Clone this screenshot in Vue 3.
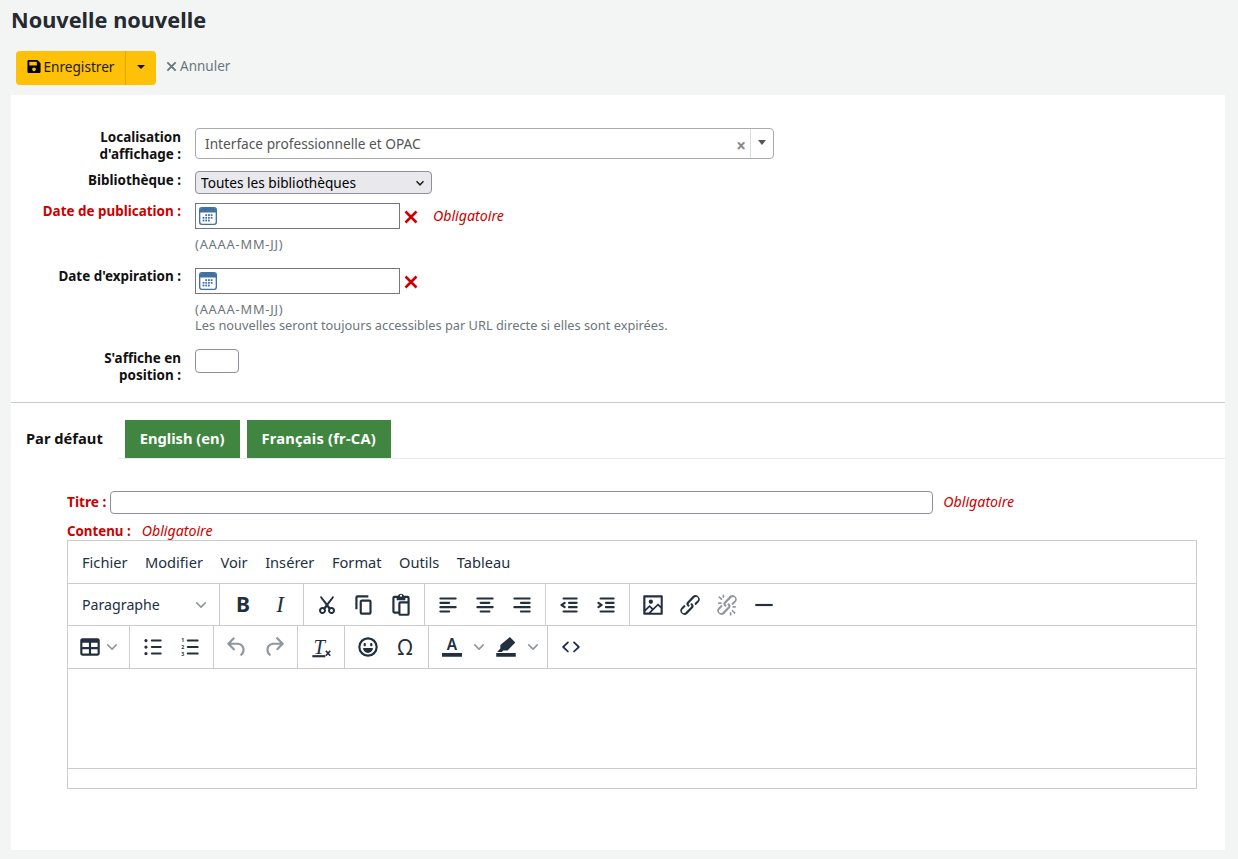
<script setup>
const savePath = 'M433.9 129.9l-83.9-83.9A48 48 0 0 0 316.1 32H48C21.5 32 0 53.5 0 80v352c0 26.5 21.5 48 48 48h352c26.5 0 48-21.5 48-48V163.9a48 48 0 0 0-14.1-33.9zM224 416c-35.3 0-64-28.7-64-64 0-35.3 28.7-64 64-64s64 28.7 64 64c0 35.3-28.7 64-64 64zm96-304.5V212c0 6.6-5.4 12-12 12H76c-6.6 0-12-5.4-12-12V108c0-6.6 5.4-12 12-12h228.5c3.2 0 6.2 1.3 8.5 3.5l3.5 3.5A12 12 0 0 1 320 111.5z'
const chevron = 'M8.7 2.2c.3-.3.8-.3 1 0 .4.4.4.9 0 1.2L5.7 7.8c-.3.3-.9.3-1.2 0L.2 3.4a.8.8 0 010-1.2c.3-.3.8-.3 1.1 0L5 6l3.7-3.8z'
const calDots = [[7,8],[10,8],[13,8],[4,11],[7,11],[10,11],[13,11],[4,14],[7,14],[10,14]]
const icons = {
  cut: 'M7.5 14a3.5 3.5 0 103.1 1.9L12 14l1.4 1.9A3.5 3.5 0 1016.5 14c-.5 0-.9.1-1.3.2L13.3 12l5.4-7.2c.3-.4.2-1-.2-1.3-.4-.3-1-.2-1.3.2L12 10.3 6.8 3.7c-.3-.4-.9-.5-1.3-.2-.4.3-.5.9-.2 1.3l5.4 7.2-1.9 2.2c-.4-.1-.8-.2-1.3-.2zm0 2a1.5 1.5 0 110 3 1.5 1.5 0 010-3zm9 0a1.5 1.5 0 110 3 1.5 1.5 0 010-3z',
  copy: 'M16 3H6a2 2 0 00-2 2v11h2V5h10V3zm1 4a2 2 0 012 2v10a2 2 0 01-2 2H10a2 2 0 01-2-2V9c0-1.1.9-2 2-2h7zm0 12V9h-7v10h7z',
  paste: 'M9.2 3.5A3 3 0 0114.800 3.500H18a2 2 0 012 2V20a2 2 0 01-2 2H11.500a2 2 0 01-2-2H6a2 2 0 01-2-2V5.500a2 2 0 012-2zM6 5.500V18h3.500V10.500a2 2 0 012-2H18V5.500H16V7.500H8V5.500zM11.500 10.500V20H18V10.500zM12 2.600a.9.9 0 10.01 0z',
  left: 'M5 5h14c.6 0 1 .4 1 1s-.4 1-1 1H5a1 1 0 110-2zm0 4h8c.6 0 1 .4 1 1s-.4 1-1 1H5a1 1 0 110-2zm0 8h8c.6 0 1 .4 1 1s-.4 1-1 1H5a1 1 0 010-2zm0-4h14c.6 0 1 .4 1 1s-.4 1-1 1H5a1 1 0 010-2z',
  center: 'M5 5h14c.6 0 1 .4 1 1s-.4 1-1 1H5a1 1 0 110-2zm3 4h8c.6 0 1 .4 1 1s-.4 1-1 1H8a1 1 0 110-2zm0 8h8c.6 0 1 .4 1 1s-.4 1-1 1H8a1 1 0 010-2zm-3-4h14c.6 0 1 .4 1 1s-.4 1-1 1H5a1 1 0 010-2z',
  right: 'M5 5h14c.6 0 1 .4 1 1s-.4 1-1 1H5a1 1 0 110-2zm6 4h8c.6 0 1 .4 1 1s-.4 1-1 1h-8a1 1 0 010-2zm0 8h8c.6 0 1 .4 1 1s-.4 1-1 1h-8a1 1 0 010-2zm-6-4h14c.6 0 1 .4 1 1s-.4 1-1 1H5a1 1 0 010-2z',
  outdent: 'M7 5h12c.6 0 1 .4 1 1s-.4 1-1 1H7a1 1 0 110-2zm5 4h7c.6 0 1 .4 1 1s-.4 1-1 1h-7a1 1 0 010-2zm0 4h7c.6 0 1 .4 1 1s-.4 1-1 1h-7a1 1 0 010-2zm-5 4h12a1 1 0 010 2H7a1 1 0 010-2zm1.6-3.8a1 1 0 01-1.2 1.6l-3-2a1 1 0 010-1.6l3-2a1 1 0 011.2 1.6L6.8 12l1.8 1.2z',
  indent: 'M7 5h12c.6 0 1 .4 1 1s-.4 1-1 1H7a1 1 0 110-2zm5 4h7c.6 0 1 .4 1 1s-.4 1-1 1h-7a1 1 0 010-2zm0 4h7c.6 0 1 .4 1 1s-.4 1-1 1h-7a1 1 0 010-2zm-5 4h12a1 1 0 010 2H7a1 1 0 010-2zm-2.6-3.8L6.2 12l-1.8-1.2a1 1 0 011.2-1.6l3 2a1 1 0 010 1.6l-3 2a1 1 0 11-1.2-1.6z',
  image: 'M5 15.7l3.3-3.2c.3-.3.7-.3 1 0L12 15l4.1-4c.3-.4.8-.4 1 0l2 1.9V5H5v10.7zM5 18V19h3l2.8-2.9-2-2L5 17.9zm14-3l-2.5-2.4-6.4 6.5H19v-4zM4 3h16c.6 0 1 .4 1 1v16c0 .6-.4 1-1 1H4a1 1 0 01-1-1V4c0-.6.4-1 1-1zm6 8a2 2 0 100-4 2 2 0 000 4z',
  link: 'M6.2 12.3a1 1 0 011.4 1.4l-2 2a2 2 0 102.6 2.8l4.8-4.8a1 1 0 000-1.4 1 1 0 111.4-1.3 2.9 2.9 0 010 4L9.6 20a3.9 3.9 0 01-5.5-5.5l2-2zm11.6-.6a1 1 0 01-1.4-1.4l2-2a2 2 0 10-2.6-2.8L11 10.3a1 1 0 000 1.4A1 1 0 119.6 13a2.9 2.9 0 010-4L14.4 4a3.9 3.9 0 015.5 5.5l-2 2z',
  unlink: 'M6.2 12.3a1 1 0 011.4 1.4l-2.1 2a2 2 0 102.7 2.8l4.8-4.8a1 1 0 000-1.4 1 1 0 111.4-1.3 2.9 2.9 0 010 4L9.6 20a3.9 3.9 0 01-5.5-5.5l2-2zm11.6-.6a1 1 0 01-1.4-1.4l2.1-2a2 2 0 10-2.7-2.8L11 10.3a1 1 0 000 1.4A1 1 0 119.6 13a2.9 2.9 0 010-4L14.4 4a3.9 3.9 0 015.5 5.5l-2 2zM7.6 6.3a.8.8 0 01-1 1.1L4.7 5.5a.8.8 0 111-1.1l2 1.9zm-1.3 3.2a.8.8 0 110 1.6H4.5a.8.8 0 010-1.6h1.8zm3.2-4.8a.8.8 0 11-1.6 0V3a.8.8 0 111.6 0v1.7zm6.9 13a.8.8 0 011-1.1l2 2a.8.8 0 11-1.1 1zm1.3-3.2a.8.8 0 010-1.6h1.8a.8.8 0 010 1.6zm-3.2 4.8a.8.8 0 011.6 0v1.7a.8.8 0 01-1.6 0z',
  hr: 'M4 11h16v2H4z',
  table: 'M19 4a2 2 0 012 2v12a2 2 0 01-2 2H5a2 2 0 01-2-2V6c0-1.1.9-2 2-2h14zM5 14v4h6v-4H5zm14 0h-6v4h6v-4zm0-6h-6v4h6V8zM5 12h6V8H5v4z',
  bullist: 'M11 5h8c.6 0 1 .4 1 1s-.4 1-1 1h-8a1 1 0 010-2zm0 6h8c.6 0 1 .4 1 1s-.4 1-1 1h-8a1 1 0 010-2zm0 6h8c.6 0 1 .4 1 1s-.4 1-1 1h-8a1 1 0 010-2zM5.500 4.500a1.500 1.500 0 110 3 1.500 1.500 0 010-3zm0 6a1.500 1.500 0 110 3 1.500 1.500 0 010-3zm0 6a1.500 1.500 0 110 3 1.500 1.500 0 010-3z',
  numlist: 'M10 17h9c.6 0 1 .4 1 1s-.4 1-1 1h-9a1 1 0 010-2zm0-6h9c.6 0 1 .4 1 1s-.4 1-1 1h-9a1 1 0 010-2zm0-6h9c.6 0 1 .4 1 1s-.4 1-1 1h-9a1 1 0 110-2z',
  undo: 'M6.4 8H12c3.7 0 6.2 2 6.8 5.1.6 2.7-.4 5.6-2.3 6.8a1 1 0 01-1-1.8c1.1-.6 1.8-2.7 1.4-4.6-.5-2.1-2.1-3.5-4.9-3.5H6.4l3.3 3.3a1 1 0 11-1.4 1.4l-5-5a1 1 0 010-1.4l5-5a1 1 0 011.4 1.4L6.4 8z',
  redo: 'M17.6 10H12c-2.8 0-4.4 1.4-4.9 3.5-.4 2 .3 4 1.4 4.6a1 1 0 11-1 1.8c-2-1.2-2.9-4.1-2.3-6.8.6-3 3-5.1 6.8-5.1h5.6l-3.3-3.3a1 1 0 111.4-1.4l5 5a1 1 0 010 1.4l-5 5a1 1 0 01-1.4-1.4l3.3-3.3z',
  emoji: 'M12 3a9 9 0 110 18 9 9 0 010-18zm0 2a7 7 0 100 14 7 7 0 000-14zM9 8.300c.6 0 1 .4 1 1v1c0 .6-.4 1-1 1s-1-.4-1-1v-1c0-.6.4-1 1-1zm6 0c.6 0 1 .4 1 1v1c0 .6-.4 1-1 1s-1-.4-1-1v-1c0-.6.4-1 1-1zM7.500 13h9c0 2.500-2 4.500-4.500 4.500S7.500 15.500 7.500 13z',
  hilite: 'M3 17.500h18V21H3zM15.600 2.800l5 5-7.200 7.400H9.500l-1.400 1.300H3.800l3-3.200V10.200z',
  code: 'M9.8 15.7c.3.3.3.8 0 1-.3.4-.9.4-1.2 0l-4.400-4.100a.8.8 0 010-1.200l4.400-4.200c.3-.3.9-.3 1.200 0 .3.3.3.8 0 1.100L6 12l3.800 3.700zm4.400 0L18 12l-3.800-3.700c-.3-.3-.3-.8 0-1.100.3-.3.900-.3 1.200 0l4.400 4.200c.3.3.3.900 0 1.200l-4.400 4.100c-.3.4-.9.4-1.200 0-.3-.2-.3-.7 0-1z'
}
const menus = ['Fichier', 'Modifier', 'Voir', 'Insérer', 'Format', 'Outils', 'Tableau']
const row1 = [
  [{ t: 'B', c: 'glyph-b' }, { t: 'I', c: 'glyph-i' }],
  [{ i: 'cut', vb: '-1 -1 26 26' }, { i: 'copy' }, { i: 'paste', rule: 'evenodd' }],
  [{ i: 'left' }, { i: 'center' }, { i: 'right' }],
  [{ i: 'outdent' }, { i: 'indent' }],
  [{ i: 'image' }, { i: 'link' }, { i: 'unlink', off: true }, { i: 'hr' }]
]
const row2 = [
  [{ i: 'bullist' }, { i: 'numlist', nums: true }],
  [{ i: 'undo', off: true }, { i: 'redo', off: true }],
  [{ clear: true }],
  [{ i: 'emoji' }, { t: 'Ω', c: 'glyph-o' }]
]
</script>

<template>
  <div class="page">
    <h1 class="title">Nouvelle nouvelle</h1>
    <div class="actions">
      <div class="split-btn">
        <button class="save" type="button">
          <svg class="save-icon" viewBox="0 0 448 512"><path :d="savePath" /></svg>Enregistrer
        </button>
        <button class="caret-btn" type="button"><span class="caret"></span></button>
      </div>
      <a class="cancel">
        <svg class="cancel-icon" viewBox="0 0 12 12"><path d="M1.500 1.500l9 9M10.500 1.500l-9 9" /></svg>Annuler
      </a>
    </div>

    <main class="panel">
      <section class="form">
        <div class="row row-loc">
          <label class="lab">Localisation d'affichage :</label>
          <div class="select2">
            <span class="s2-text">Interface professionnelle et OPAC</span>
            <span class="s2-clear">×</span>
            <span class="s2-arrow"><i class="s2-tri"></i></span>
          </div>
        </div>
        <div class="row">
          <label class="lab">Bibliothèque :</label>
          <div class="native-wrap">
            <select class="native">
              <option>Toutes les bibliothèques</option>
            </select>
            <svg class="native-chev" viewBox="0 0 10 10"><path d="M1.500 3.200L5 6.800l3.500-3.600" fill="none" stroke="#222" stroke-width="1.500" /></svg>
          </div>
        </div>
        <div class="row row-date">
          <label class="lab req">Date de publication :</label>
          <div>
            <div class="date-line">
              <div class="date-wrap">
                <input class="date" type="text" />
                <svg class="cal" viewBox="0 0 20 20">
                  <rect x="0.750" y="0.750" width="18.500" height="18.500" rx="2.500" fill="#fff" stroke="#41719f" stroke-width="1.500" />
                  <path d="M1 3.500a2.500 2.500 0 012.500-2.500h13a2.500 2.500 0 012.500 2.500V6H1z" fill="#41719f" />
                  <g fill="#41719f">
                    <rect v-for="p in calDots" :key="p.join()" :x="p[0]" :y="p[1]" width="2" height="2" />
                  </g>
                </svg>
              </div>
              <svg class="clear-x" viewBox="0 0 14 14"><path d="M1.500 1.500l11 11M12.500 1.500l-11 11" /></svg>
              <span class="oblig date-oblig">Obligatoire</span>
            </div>
            <div class="hint hint-first">(AAAA-MM-JJ)</div>
          </div>
        </div>
        <div class="row row-date">
          <label class="lab">Date d'expiration :</label>
          <div>
            <div class="date-line">
              <div class="date-wrap">
                <input class="date" type="text" />
                <svg class="cal" viewBox="0 0 20 20">
                  <rect x="0.750" y="0.750" width="18.500" height="18.500" rx="2.500" fill="#fff" stroke="#41719f" stroke-width="1.500" />
                  <path d="M1 3.500a2.500 2.500 0 012.500-2.500h13a2.500 2.500 0 012.500 2.500V6H1z" fill="#41719f" />
                  <g fill="#41719f">
                    <rect v-for="p in calDots" :key="p.join()" :x="p[0]" :y="p[1]" width="2" height="2" />
                  </g>
                </svg>
              </div>
              <svg class="clear-x" viewBox="0 0 14 14"><path d="M1.500 1.500l11 11M12.500 1.500l-11 11" /></svg>
            </div>
            <div class="hint hint-first">(AAAA-MM-JJ)</div>
            <div class="hint">Les nouvelles seront toujours accessibles par URL directe si elles sont expirées.</div>
          </div>
        </div>
        <div class="row">
          <label class="lab">S'affiche en<br />position :</label>
          <input class="pos" type="text" />
        </div>
      </section>

      <div class="tabs">
        <span class="tab active">Par défaut</span>
        <span class="tab">English (en)</span>
        <span class="tab">Français (fr-CA)</span>
      </div>

      <section class="pane">
        <div class="title-row">
          <label class="req pane-lab">Titre :</label>
          <input class="title-input" type="text" />
          <span class="oblig title-oblig">Obligatoire</span>
        </div>
        <div class="content-row">
          <label class="req pane-lab">Contenu :</label>
          <span class="oblig content-oblig">Obligatoire</span>
        </div>

        <div class="editor">
          <div class="menubar">
            <span v-for="m in menus" :key="m" class="menu">{{ m }}</span>
          </div>

          <div class="toolbar">
            <div class="blocks">
              <span>Paragraphe</span>
              <svg class="chev" viewBox="0 0 10 10"><path :d="chevron" /></svg>
            </div>
            <div v-for="(g, gi) in row1" :key="gi" class="group">
              <span v-for="(b, bi) in g" :key="bi" class="tbtn" :class="{ off: b.off }">
                <span v-if="b.t" :class="b.c">{{ b.t }}</span>
                <svg v-else class="ico" :viewBox="b.vb || '0 0 24 24'"><path :d="icons[b.i]" :fill-rule="b.rule" /></svg>
              </span>
            </div>
          </div>

          <div class="toolbar">
            <div class="group first">
              <span class="split">
                <svg class="ico" viewBox="0 0 24 24"><path :d="icons.table" /></svg>
                <svg class="chev" viewBox="0 0 10 10"><path :d="chevron" /></svg>
              </span>
            </div>
            <div v-for="(g, gi) in row2" :key="gi" class="group">
              <span v-for="(b, bi) in g" :key="bi" class="tbtn" :class="{ off: b.off }">
                <span v-if="b.t" :class="b.c">{{ b.t }}</span>
                <svg v-else-if="b.clear" class="ico" viewBox="0 0 24 24">
                  <text x="5" y="18" class="svg-t">T</text>
                  <rect x="4" y="19.500" width="12" height="2" />
                  <path d="M16.500 15.500l4 4.500M20.500 15.500l-4 4.500" stroke="#222f3e" stroke-width="1.500" fill="none" />
                </svg>
                <svg v-else class="ico" viewBox="0 0 24 24">
                  <path :d="icons[b.i]" />
                  <g v-if="b.nums" class="svg-n">
                    <text x="4" y="7.300">1</text>
                    <text x="4" y="14">2</text>
                    <text x="4" y="20.700">3</text>
                  </g>
                </svg>
              </span>
            </div>
            <div class="group colors">
              <span class="split wide">
                <svg class="ico" viewBox="0 0 24 24">
                  <text x="12" y="14.800" class="svg-a">A</text>
                  <rect x="2.800" y="17.500" width="18.400" height="3.500" />
                </svg>
                <svg class="chev" viewBox="0 0 10 10"><path :d="chevron" /></svg>
              </span>
              <span class="split wide">
                <svg class="ico" viewBox="0 0 24 24"><path :d="icons.hilite" /></svg>
                <svg class="chev" viewBox="0 0 10 10"><path :d="chevron" /></svg>
              </span>
            </div>
            <div class="group last">
              <span class="tbtn"><svg class="ico" viewBox="0 0 24 24"><path :d="icons.code" /></svg></span>
            </div>
          </div>

          <div class="edit-area"></div>
          <div class="statusbar"></div>
        </div>
      </section>
    </main>
  </div>
</template>

<style>
html, body { margin: 0; background: #f3f5f4; }
</style>

<style scoped>
.page {
  font-family: "Noto Sans", "Open Sans", sans-serif;
  font-size: 14px;
  line-height: 17px;
  color: #000;
  height: 859px;
  box-sizing: border-box;
  padding: 0 13px 9px 11px;
  display: flex;
  flex-direction: column;
  overflow: hidden;
}
.title {
  margin: 0;
  padding-top: 7px;
  height: 51px;
  box-sizing: border-box;
  font-size: 21.700px;
  line-height: 26px;
  font-weight: 700;
  color: #252a30;
}
.actions {
  display: flex;
  align-items: center;
  padding-left: 5px;
  height: 34px;
  margin-bottom: 10px;
}
.split-btn {
  display: flex;
  height: 34px;
  width: 140px;
  background: #ffc107;
  border-radius: 4px;
}
.save, .caret-btn {
  border: 0;
  background: none;
  padding: 0;
  font: inherit;
  font-size: 13.600px;
  color: #1b1b1b;
  display: flex;
  align-items: center;
  justify-content: center;
}
.save { width: 110px; border-right: 1px solid #dca707; box-sizing: border-box; padding-bottom: 4px; }
.caret-btn { flex: 1; padding-bottom: 2px; }
.caret { border: 4.500px solid transparent; border-top-color: #111; border-bottom: 0; }
.save-icon { width: 14px; height: 15px; margin-right: 3px; fill: #000; }
.cancel {
  display: flex;
  align-items: center;
  margin-left: 10px;
  margin-top: -4px;
  color: #6c757d;
  font-size: 13.500px;
}
.cancel-icon { width: 11px; height: 11px; margin-right: 3px; fill: none; stroke: #6c757d; stroke-width: 2; }
.panel { flex: 1; background: #fff; display: flex; flex-direction: column; }
.form {
  padding: 33px 0 0;
  height: 308px;
  box-sizing: border-box;
  border-bottom: 1px solid #c9cccd;
  flex: none;
}
.row {
  display: grid;
  grid-template-columns: 142px auto;
  justify-content: start;
  column-gap: 14px;
  padding-left: 28px;
  margin-bottom: 9px;
  align-items: start;
}
.row-loc { min-height: 34px; }
.row-date { margin-bottom: 16px; }
.lab {
  font-weight: 700;
  font-size: 13.450px;
  text-align: right;
  color: #111;
  margin: 1px 0 -1px;
}
.row-date .lab { margin: 0; }
.lab.req, .req { color: #cc0000; }
.select2 {
  width: 579px;
  height: 31px;
  box-sizing: border-box;
  border: 1px solid #aaa;
  border-radius: 4px;
  display: flex;
  align-items: center;
  padding-left: 9px;
  color: #555;
  font-size: 13.700px;
}
.s2-text { flex: 1; }
.s2-clear {
  width: 14px;
  margin-right: 2px;
  text-align: center;
  font-size: 17px;
  font-weight: 700;
  color: #888;
  padding-top: 3px;
}
.s2-arrow {
  width: 22px;
  height: 100%;
  border-left: 1px solid #ddd;
  display: flex;
  align-items: center;
  justify-content: center;
}
.s2-tri { border: 4px solid transparent; border-top: 5px solid #555; border-bottom: 0; margin-top: -2px; }
.native-wrap { position: relative; width: 237px; height: 23px; }
.native {
  appearance: none;
  width: 100%;
  height: 100%;
  box-sizing: border-box;
  border: 1px solid #8f8f9d;
  border-radius: 4px;
  background: #e9e9ed;
  font: inherit;
  font-size: 13.650px;
  color: #000;
  padding: 0 0 0 5px;
}
.native-chev { position: absolute; right: 7px; top: 7px; width: 10px; height: 10px; }
.date-line { display: flex; align-items: center; height: 26px; }
.date-wrap { position: relative; width: 205px; height: 26px; }
.date {
  width: 100%;
  height: 100%;
  box-sizing: border-box;
  border: 1px solid #767680;
  background: #fff;
  padding: 0;
  display: block;
}
.cal { position: absolute; left: 4px; top: 4px; width: 18px; height: 18px; }
.clear-x { width: 14px; height: 14px; margin-left: 4px; margin-top: 2px; fill: none; stroke: #cc0000; stroke-width: 2.600; }
.oblig { font-style: italic; color: #cc0000; font-size: 14.200px; }
.date-oblig { margin-left: 15px; margin-top: -1px; }
.hint { color: #6c757d; font-size: 12.800px; line-height: 16px; }
.hint-first { margin-top: 7px; letter-spacing: 0.800px; }
.pos {
  width: 44px;
  height: 24px;
  box-sizing: border-box;
  border: 1px solid #8f8f9d;
  border-radius: 4px;
  padding: 0;
}
.tabs {
  display: flex;
  gap: 7px;
  margin-top: 17px;
  height: 39px;
  box-sizing: border-box;
  border-bottom: 1px solid #e9ecec;
  flex: none;
  font-size: 14.700px;
}
.tab {
  height: 38px;
  padding: 0 15px 2px;
  display: flex;
  align-items: center;
  font-weight: 700;
  color: #fff;
  background: #408540;
  box-sizing: border-box;
}
.tab:last-child { letter-spacing: 0.200px; }
.tab.active { background: #fff; color: #111; height: 39px; }
.pane { padding: 0 28px 0 56px; flex: 1; }
.title-row { display: flex; align-items: center; margin-top: 32px; height: 23px; }
.pane-lab { font-weight: 700; font-size: 13.700px; }
.title-row .pane-lab { margin-top: -2px; }
.content-row .pane-lab { font-size: 13.300px; margin-top: 2px; }
.title-input {
  margin-left: 4px;
  width: 823px;
  height: 23px;
  box-sizing: border-box;
  border: 1px solid #8f8f9d;
  border-radius: 4px;
  padding: 0;
  flex: none;
}
.title-oblig { margin-left: 10px; margin-top: -3px; }
.content-row { display: flex; align-items: center; height: 17px; margin-top: 8px; }
.content-oblig { margin-left: 11px; }
.editor {
  margin-top: 1px;
  width: 1130px;
  height: 249px;
  box-sizing: border-box;
  border: 1px solid #ccc;
  display: flex;
  flex-direction: column;
  color: #222f3e;
}
.menubar {
  height: 43px;
  flex: none;
  box-sizing: border-box;
  border-bottom: 1px solid #ccc;
  display: flex;
  align-items: center;
  padding-left: 14px;
  gap: 17.500px;
  font-size: 14.630px;
}
.toolbar {
  display: flex;
  height: 42px;
  flex: none;
  box-sizing: border-box;
  border-bottom: 1px solid #ccc;
}
.toolbar + .toolbar { height: 43px; }
.blocks {
  width: 152px;
  box-sizing: border-box;
  border-right: 1px solid #ccc;
  padding: 0 13px 0 14px;
  display: flex;
  align-items: center;
  justify-content: space-between;
  font-size: 14.200px;
}
.chev { width: 10px; height: 10px; fill: #222f3e; opacity: 0.5; flex: none; }
.group {
  display: flex;
  align-items: center;
  padding: 0 4px 0 5px;
  border-right: 1px solid #ccc;
}
.group:last-child { border-right: 0; }
.tbtn {
  width: 36px;
  margin-right: 1px;
  height: 100%;
  display: flex;
  align-items: center;
  justify-content: center;
}
.tbtn.off { opacity: 0.5; }
.ico { width: 26px; height: 26px; fill: #222f3e; flex: none; }
.split { display: flex; align-items: center; width: 52px; padding-left: 4px; box-sizing: border-box; gap: 4px; }
.split.wide { width: 54px; padding-left: 5px; gap: 9px; }
.colors { padding-right: 5px; }
.glyph-b { font-family: "Noto Sans", sans-serif; font-weight: 700; font-size: 21px; line-height: 1; }
.glyph-i { font-family: "Liberation Serif", serif; font-style: italic; font-size: 23px; line-height: 1; }
.glyph-o { font-family: "Noto Sans", sans-serif; font-size: 21px; line-height: 1; }
.svg-t { font-family: "Liberation Serif", serif; font-style: italic; font-size: 19px; fill: #222f3e; }
.svg-a { font-family: "Noto Sans", sans-serif; font-weight: 600; font-size: 14.200px; text-anchor: middle; fill: #222f3e; }
.svg-n { font-family: "Noto Sans", sans-serif; font-size: 4.800px; font-weight: 700; fill: #222f3e; }
.edit-area { height: 99px; flex: none; }
.statusbar { flex: 1; border-top: 1px solid #ccc; }
</style>
